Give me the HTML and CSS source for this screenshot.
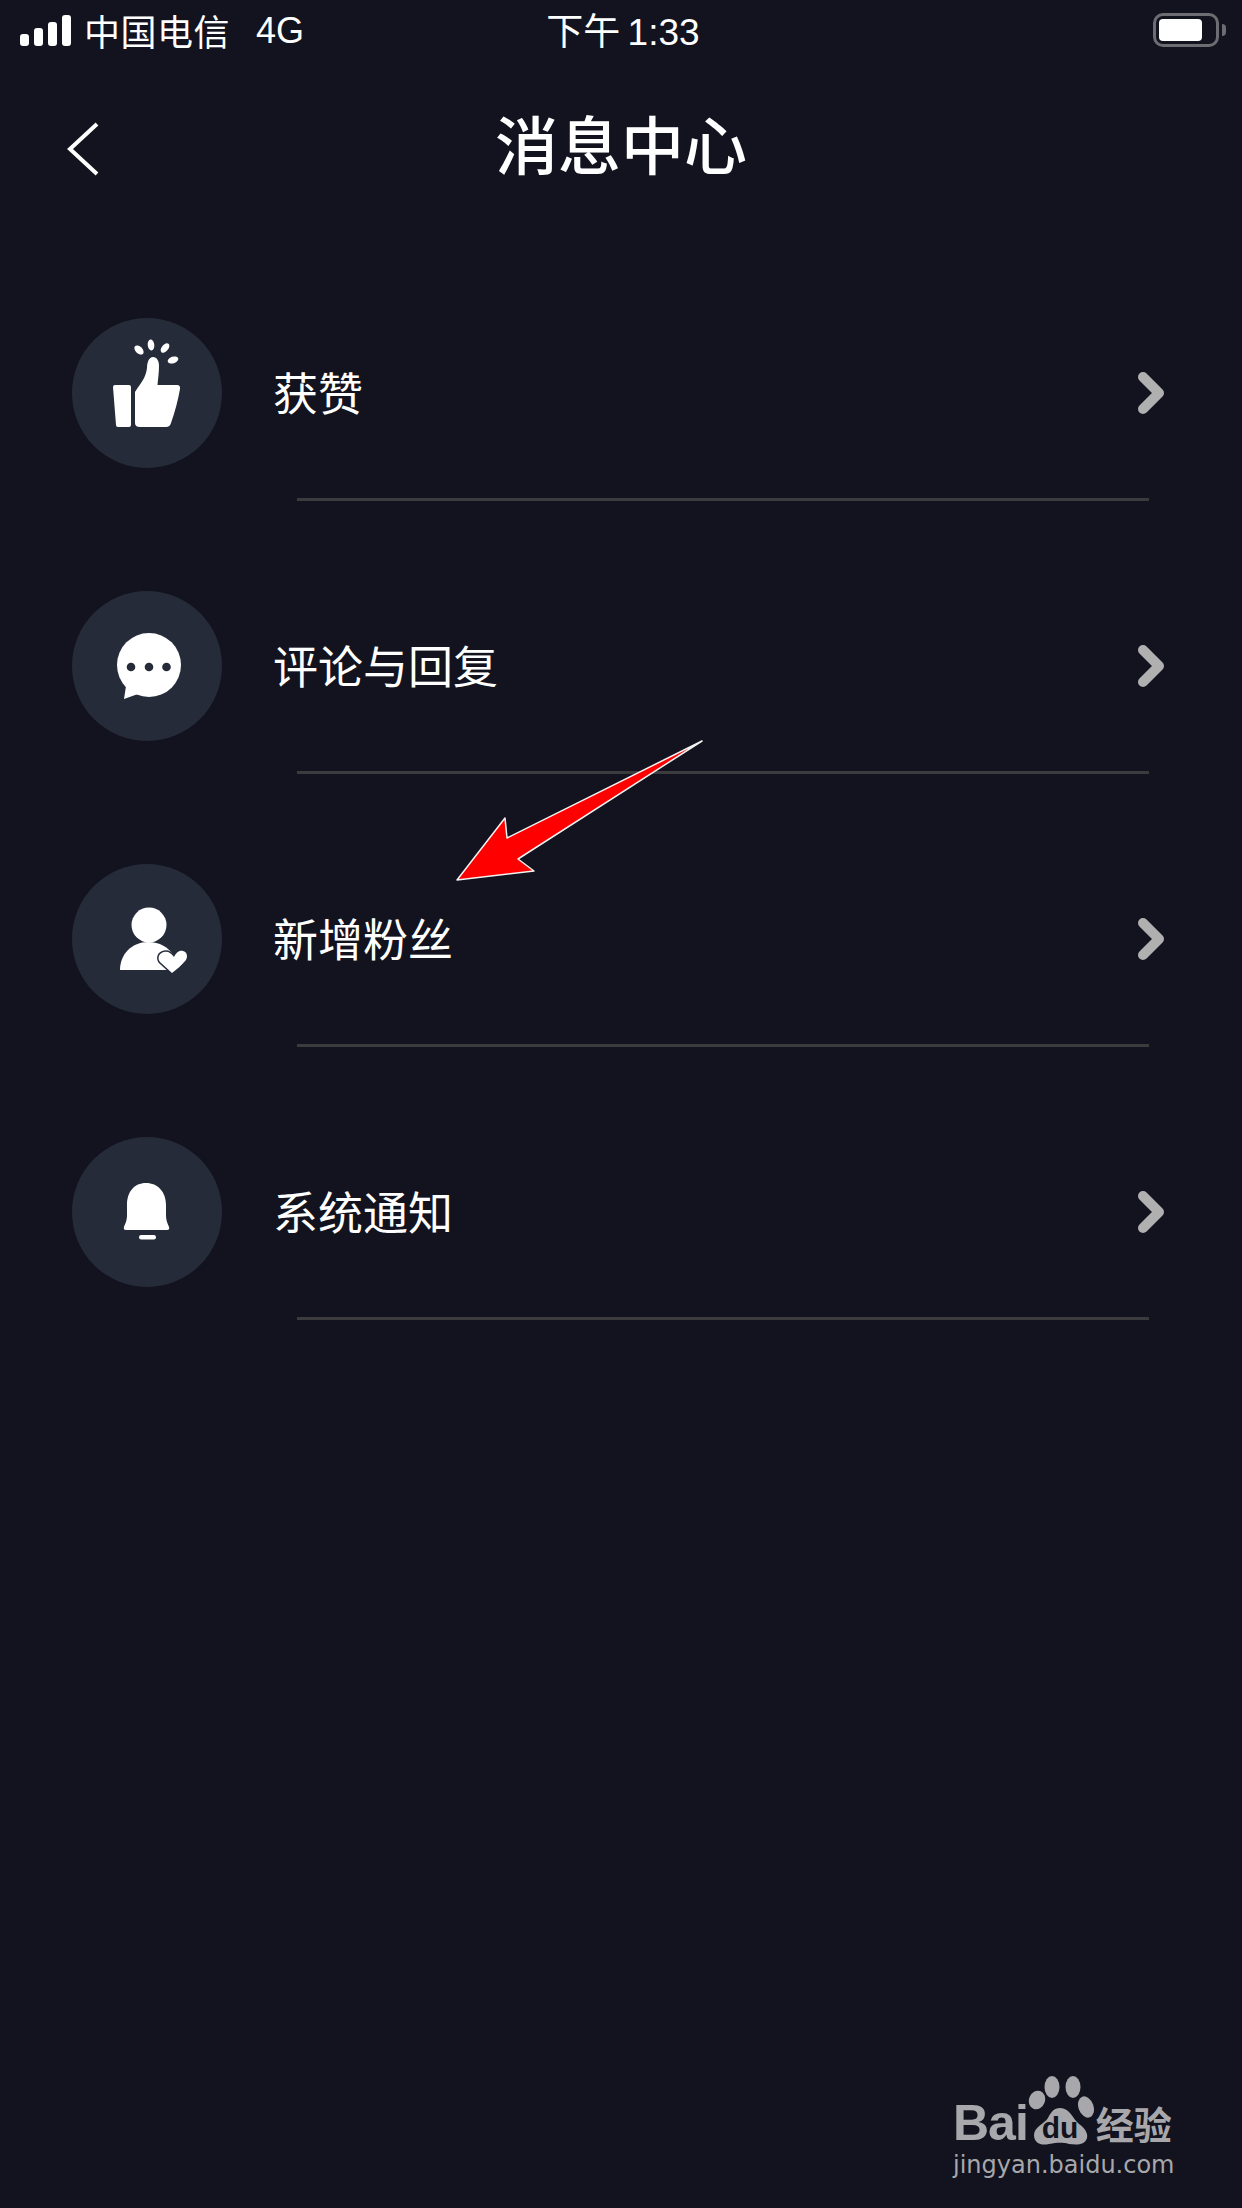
FILE: index.html
```html
<!DOCTYPE html>
<html>
  <head>
    <meta name="viewport" content="width=device-width, initial-scale=1" />
    <title>消息中心</title>
    <link rel="stylesheet" href="styles.css">
  </head>

  <body>
    <div id="status-bar">
      <div class="status-left">
        <svg class="signal" width="51" height="31" viewBox="0 0 51 31">
          <rect x="0" y="19" width="9" height="12" rx="3" />
          <rect x="14" y="13" width="9" height="18" rx="3" />
          <rect x="28" y="7" width="9" height="24" rx="3" />
          <rect x="42" y="0" width="9" height="31" rx="3" />
        </svg>
        <span class="carrier">中国电信</span>
        <span class="network">4G</span>
      </div>
      <div class="status-time">下午 1:33</div>
      <div class="status-right">
        <div class="battery"><div class="battery-level"></div></div>
        <div class="battery-nub"></div>
      </div>
    </div>

    <div id="nav">
      <svg class="back" width="34" height="54" viewBox="0 0 34 54">
        <path d="M31 2 L4 27 L31 52" />
      </svg>
      <h1 id="header">消息中心</h1>
    </div>

    <div id="list">
      <div class="row">
        <div class="avatar">
          <svg width="150" height="150" viewBox="0 0 150 150">
            <path class="solid" d="M43 67 H57 Q59 67 59 69 V107 Q59 109 57 109 H46 Q44 109 44 107 L41 69 Q41 67 43 67 Z" />
            <path class="solid" d="M63 74 C68 66 74 60 75 50 C75 44 77 39 81 39 C85 39 87 43 87 48 C87 55 86 61 85.500 67 H105 Q108.500 67 108 71 C106 82 103 94 99 105 Q98 109 94 109 H68 Q63 109 63 105 Z" />
            <ellipse class="solid" cx="67" cy="32" rx="3.500" ry="5.500" transform="rotate(-45 67 32)" />
            <ellipse class="solid" cx="79" cy="27" rx="3.300" ry="5.500" transform="rotate(-5 79 27)" />
            <ellipse class="solid" cx="93" cy="30" rx="3.300" ry="5.500" transform="rotate(40 93 30)" />
            <ellipse class="solid" cx="101" cy="42" rx="3.300" ry="5.500" transform="rotate(72 101 42)" />
          </svg>
        </div>
        <span class="label">获赞</span>
        <svg class="chevron" width="27" height="42" viewBox="0 0 27 42">
          <path d="M5 5 L21 21 L5 37" />
        </svg>
      </div>
      <div class="separator"></div>

      <div class="row">
        <div class="avatar">
          <svg width="150" height="150" viewBox="0 0 150 150">
            <circle class="solid" cx="77" cy="74" r="32" />
            <path class="solid" d="M54 95 L52 108 L66 103 Z" />
            <circle class="hole" cx="59" cy="76" r="4.300" />
            <circle class="hole" cx="77" cy="76" r="4.300" />
            <circle class="hole" cx="94.500" cy="76" r="4.300" />
          </svg>
        </div>
        <span class="label">评论与回复</span>
        <svg class="chevron" width="27" height="42" viewBox="0 0 27 42">
          <path d="M5 5 L21 21 L5 37" />
        </svg>
      </div>
      <div class="separator"></div>

      <div class="row">
        <div class="avatar">
          <svg width="150" height="150" viewBox="0 0 150 150">
            <circle class="solid" cx="77" cy="61" r="17.500" />
            <path class="solid" d="M48 106 C48 90 60 78 76 78 C88 78 96 83 102 92 L96 106 Z" />
            <path class="solid heart" d="M100 109 L88 98 C85 94 87 89 92 88 C96 87 99 89 102 93 C104 89 107 86 111 87 C115 88 116 92 114 96 C110 101 105 105 100 109 Z" />
          </svg>
        </div>
        <span class="label">新增粉丝</span>
        <svg class="chevron" width="27" height="42" viewBox="0 0 27 42">
          <path d="M5 5 L21 21 L5 37" />
        </svg>
      </div>
      <div class="separator"></div>

      <div class="row">
        <div class="avatar">
          <svg width="150" height="150" viewBox="0 0 150 150">
            <path class="solid" d="M74 46 C86 46 94 55 94 68 V78 C94 84 96 87 97 90 Q98 93 95 93 H54 Q51 93 52 90 C53 87 55 84 55 78 V68 C55 55 62 46 74 46 Z" />
            <rect class="solid" x="67" y="98" width="17" height="4.500" rx="2.200" />
          </svg>
        </div>
        <span class="label">系统通知</span>
        <svg class="chevron" width="27" height="42" viewBox="0 0 27 42">
          <path d="M5 5 L21 21 L5 37" />
        </svg>
      </div>
      <div class="separator"></div>
    </div>

    <!-- Red arrow drawn over the list -->
    <svg id="arrow" width="260" height="150" viewBox="450 735 260 150">
      <polygon points="702,741 507,838 505,818 457,880 534,871 518,859" />
    </svg>

    <!-- Watermark -->
    <div id="watermark">
      <div class="mark-top">
        <span class="mark-bai">Bai</span>
        <svg class="mark-paw" width="68" height="72" viewBox="98 24 68 72">
          <ellipse cx="123" cy="37" rx="7.500" ry="11" />
          <ellipse cx="144" cy="37" rx="7.500" ry="11" />
          <ellipse cx="108" cy="50" rx="8" ry="9.500" transform="rotate(20 108 50)" />
          <ellipse cx="157" cy="57" rx="7.500" ry="11" transform="rotate(-20 157 57)" />
          <path d="M131 58 C141 58 143 68 150 74 C157 79 159 84 158 88 C156 95 148 95 140 94 C132 92 128 93 120 94 C112 96 105 93 105 85 C105 77 115 74 119 68 C122 62 125 58 131 58 Z" />
          <text class="mark-du" x="131" y="88" text-anchor="middle">du</text>
        </svg>
        <span class="mark-cn">经验</span>
      </div>
      <div class="mark-url">jingyan.baidu.com</div>
    </div>
  </body>
</html>
```

FILE: styles.css
```css
* {
  box-sizing: border-box;
}

body {
  position: relative;
  width: 1242px;
  height: 2208px;
  margin: 0;
  overflow: hidden;
  background-color: #12131e;
  color: #fff;
  font-family: "Liberation Sans", "Noto Sans CJK SC", sans-serif;
}

#status-bar {
  display: grid;
  grid-template-columns: 1fr auto 1fr;
  align-items: center;
  height: 60px;
  padding: 0 16px 0 20px;
  font-size: 36px;
}

.status-left {
  display: flex;
  align-items: center;
}

.signal {
  fill: #fff;
}

.carrier {
  margin-left: 13px;
  letter-spacing: 0.5px;
}

.network {
  margin: 2px 0 0 26px;
}

.status-time {
  margin-top: -3px;
  font-size: 37px;
  word-spacing: -3px;
}

.status-right {
  display: flex;
  align-items: center;
  justify-content: flex-end;
}

.battery {
  width: 66px;
  height: 34px;
  padding: 3px;
  border: 3px solid #6c6c72;
  border-radius: 10px;
}

.battery-level {
  width: 43px;
  height: 22px;
  background-color: #fff;
  border-radius: 4px;
}

.battery-nub {
  width: 4px;
  height: 12px;
  margin-left: 3px;
  background-color: #6c6c72;
  border-radius: 0 6px 6px 0;
}

#nav {
  position: relative;
  display: flex;
  align-items: center;
  justify-content: center;
  height: 168px;
}

.back {
  position: absolute;
  left: 66px;
  top: 62px;
  fill: none;
  stroke: #fff;
  stroke-width: 4px;
}

#header {
  margin: -5px 0 0;
  font-size: 63px;
  font-weight: 500;
}

#list {
  padding-top: 90px;
}

.row {
  display: flex;
  align-items: center;
  height: 150px;
  padding: 0 77px 0 72px;
}

.avatar {
  width: 150px;
  height: 150px;
  background-color: #252b39;
  border-radius: 50%;
}

.solid {
  fill: #fff;
}

.hole {
  fill: #252b39;
}

.heart {
  stroke: #252b39;
  stroke-width: 3px;
  paint-order: stroke;
}

.label {
  margin: -3px 0 0 51px;
  font-size: 45px;
}

.chevron {
  margin-left: auto;
  fill: none;
  stroke: #b0b0b0;
  stroke-width: 10px;
  stroke-linecap: round;
  stroke-linejoin: round;
}

.separator {
  height: 3px;
  margin: 30px 93px 90px 297px;
  background-color: #3b3b3d;
}

#arrow {
  position: absolute;
  left: 450px;
  top: 735px;
}

#arrow polygon {
  fill: #ff0000;
  stroke: #f2f2f2;
  stroke-width: 1.500px;
  stroke-linejoin: round;
}

#watermark {
  position: absolute;
  left: 953px;
  top: 2074px;
  color: #a8a8ac;
}

.mark-top {
  display: flex;
  align-items: flex-end;
  height: 72px;
}

.mark-bai {
  font-size: 50px;
  font-weight: bold;
  line-height: 50px;
  margin-bottom: -2px;
  letter-spacing: -1px;
}

.mark-paw {
  margin-left: -1px;
  flex-shrink: 0;
  fill: #a8a8ac;
}

.mark-du {
  fill: #12131e;
  font-size: 30px;
  font-weight: bold;
}

.mark-cn {
  margin-left: 1px;
  font-size: 38px;
  font-weight: bold;
  line-height: 40px;
  white-space: nowrap;
}

.mark-url {
  margin-top: 4px;
  font-family: "DejaVu Sans", sans-serif;
  font-size: 24px;
  line-height: 30px;
  white-space: nowrap;
}
```
